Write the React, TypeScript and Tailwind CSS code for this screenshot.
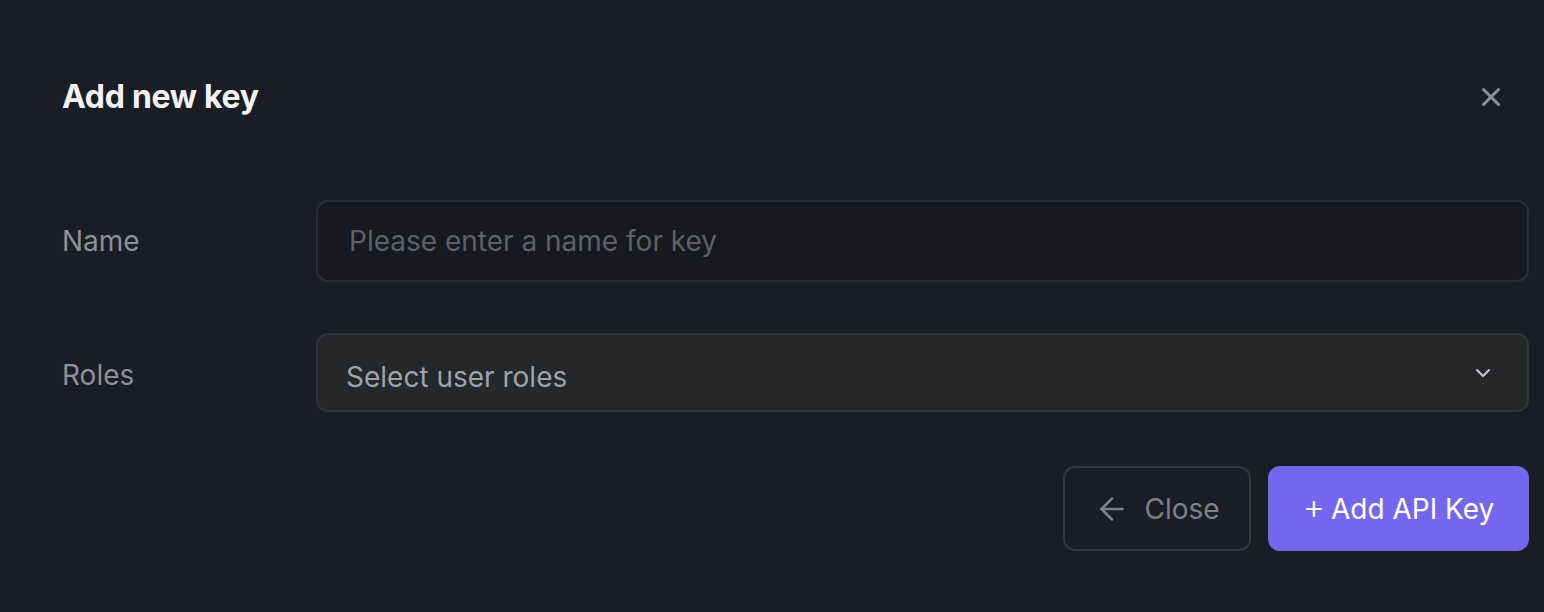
import { ArrowLeft, ChevronDown, X } from 'lucide-react';

export default function App() {
  return (
    <div
      className="w-[1544px] h-[612px] bg-[#1b1d25] pl-[62px] pr-[15px] pt-[77px] overflow-hidden"
      style={{ fontFamily: 'Inter, "Noto Sans", sans-serif' }}
    >
      <div className="flex items-center justify-between h-[40px]">
        <h2 className="text-[32px] font-bold text-[#f2f2f3] leading-[40px] tracking-[-0.3px]">Add new key</h2>
        <button className="w-[44px] h-[44px] flex items-center justify-center text-[#8b8f99] mr-[16px]">
          <X className="w-[30px] h-[30px]" strokeWidth={2.4} />
        </button>
      </div>

      <div className="mt-[83px] flex items-center">
        <label className="w-[254px] shrink-0 text-[28px] text-[#8b9099]">Name</label>
        <input
          placeholder="Please enter a name for key"
          className="flex-1 h-[82px] rounded-[12px] bg-[#18191e] border-2 border-[#2c2e35] px-[31px] text-[28px] text-[#d0d2d6] placeholder:text-[#5e6067] outline-none"
        />
      </div>

      <div className="mt-[51px] flex items-center">
        <label className="w-[254px] shrink-0 text-[28px] text-[#8b9099] mt-[4px]">Roles</label>
        <div className="flex-1 h-[79px] rounded-[12px] bg-[#262729] border-2 border-[#323337] pl-[28px] pr-[32px] flex items-center justify-between">
          <span className="text-[28px] text-[#9ca3ad] mt-[8px]">Select user roles</span>
          <ChevronDown className="w-[24px] h-[24px] text-[#c8cace]" strokeWidth={2} />
        </div>
      </div>

      <div className="mt-[54px] flex justify-end gap-[17px]">
        <button className="w-[188px] h-[85px] rounded-[12px] border-2 border-[#35373d] flex items-center justify-center gap-[14px] text-[#7d8088] text-[28px]">
          <ArrowLeft className="w-[36px] h-[36px]" strokeWidth={1.7} />
          <span>Close</span>
        </button>
        <button className="w-[261px] h-[85px] rounded-[12px] bg-[#7367ee] flex items-center justify-center gap-[6px] text-white text-[28px] font-normal">
          <span className="text-[34px] leading-none font-light -mt-[3px]">+</span>
          <span>Add API Key</span>
        </button>
      </div>
    </div>
  );
}
